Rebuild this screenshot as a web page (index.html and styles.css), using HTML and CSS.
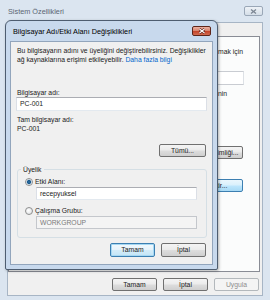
FILE: index.html
```html
<!DOCTYPE html>
<html lang="tr">

<head>
    <meta charset="UTF-8">
    <meta name="viewport" content="width=device-width, initial-scale=1.0">
    <title>Bilgisayar Adı/Etki Alanı Değişiklikleri</title>
    <link rel="stylesheet" href="styles.css">
</head>

<body>
    <!-- arka pencere: Sistem Özellikleri -->
    <div class="window">
        <div class="window-title">
            <span class="title-text">Sistem Özellikleri</span>
            <span class="close-btn inactive">
                <svg width="7" height="5" viewBox="0 0 7 5"><path d="M1 0.5 L6 4.5 M6 0.5 L1 4.5" stroke="#7d8794" stroke-width="1.3" fill="none"/></svg>
            </span>
        </div>
        <div class="window-body">
            <div class="tab-panel">
                <!-- only what shows right of the dialog -->
                <div class="panel-row">mak için</div>
                <div class="panel-input"></div>
                <div class="panel-row short">nin</div>
                <button class="btn panel-btn first">Ağ Kimliği...</button>
                <button class="btn panel-btn hot">Değiştir...</button>
            </div>
            <div class="button-row window-buttons">
                <button class="btn">Tamam</button>
                <button class="btn">İptal</button>
                <button class="btn disabled">Uygula</button>
            </div>
        </div>
    </div>

    <!-- ön pencere -->
    <div class="dialog">
        <div class="dialog-title">
            <span class="title-text">Bilgisayar Adı/Etki Alanı Değişiklikleri</span>
            <span class="close-btn active">
                <svg width="8" height="6" viewBox="0 0 8 6"><path d="M1.5 1 L6.5 5 M6.5 1 L1.5 5" stroke="#5a1a10" stroke-width="2.4" fill="none"/><path d="M1.5 1 L6.5 5 M6.5 1 L1.5 5" stroke="#ffffff" stroke-width="1.2" fill="none"/></svg>
            </span>
        </div>
        <div class="dialog-body">
            <p class="intro">Bu bilgisayarın adını ve üyeliğini değiştirebilirsiniz. Değişiklikler<br>
                ağ kaynaklarına erişimi etkileyebilir. <a href="#">Daha fazla bilgi</a></p>

            <div class="label name-label">Bilgisayar adı:</div>
            <div class="textbox">PC-001</div>

            <div class="label full-label">Tam bilgisayar adı:</div>
            <div class="label">PC-001</div>

            <div class="button-row more-row">
                <button class="btn">Tümü...</button>
            </div>

            <fieldset class="group">
                <legend>Üyelik</legend>
                <div class="radio-row first">
                    <span class="radio checked"></span>
                    <span>Etki Alanı:</span>
                </div>
                <div class="textbox indented">recepyuksel</div>
                <div class="radio-row">
                    <span class="radio"></span>
                    <span>Çalışma Grubu:</span>
                </div>
                <div class="textbox indented disabled">WORKGROUP</div>
            </fieldset>

            <div class="button-row dialog-buttons">
                <button class="btn default">Tamam</button>
                <button class="btn">İptal</button>
            </div>
        </div>
    </div>
</body>

</html>
```

FILE: styles.css
```css
body {
    margin: 0;
    font-family: "Liberation Sans", Arial, sans-serif;
    font-size: 6.8px;
    color: #1b1b1b;
    background-color: #dbe5f0;
}

/* arka pencere */

.window {
    width: 270px;
    height: 300px;
    display: flex;
    flex-direction: column;
    background-color: #dbe5f0;
    overflow: hidden;
}

.window-title {
    height: 22px;
    display: flex;
    align-items: center;
    justify-content: space-between;
    padding: 0 7px 0 8px;
    flex-shrink: 0;
}

.window-title .title-text {
    font-size: 7.3px;
    color: #5b6573;
}

.close-btn {
    display: flex;
    align-items: center;
    justify-content: center;
    box-sizing: border-box;
    width: 19px;
    height: 10px;
    border-radius: 2px;
}

.close-btn.inactive {
    border: 1px solid #9aa7b7;
    background: linear-gradient(#eef2f7, #d5dee8);
}

.close-btn.active {
    border: 1px solid #5e2519;
    background: linear-gradient(#eab1a3 0%, #d98670 45%, #c5452b 55%, #d16a4f 100%);
}

.window-body {
    flex: 1;
    margin: 0 7px 4px 7px;
    padding: 13px 2px 4px 0;
    border: 1px solid #a7b5c5;
    background-color: #f0f0f0;
    display: flex;
    flex-direction: column;
}

.tab-panel {
    height: 236px;
    box-sizing: border-box;
    border: 1px solid #898c95;
    background-color: #fbfcfc;
    padding: 0 16px 0 10px;
    display: flex;
    flex-direction: column;
}

.panel-row {
    align-self: flex-end;
    white-space: nowrap;
    height: 9px;
    line-height: 9px;
    margin-top: 10px;
}

.panel-row.short {
    margin-top: 4px;
    margin-right: 16px;
}

.panel-input {
    height: 12px;
    margin-top: 15px;
    margin-left: 198px;
    margin-right: -1px;
    border: 1px solid #c9ccd2;
    border-right-color: #dde1e6;
    background-color: #ffffff;
}

.panel-btn {
    align-self: flex-end;
    width: 65px;
    margin-top: 48px;
    padding-right: 22px;
    white-space: nowrap;
}

.panel-btn.hot {
    margin-top: 20px;
    padding-right: 18px;
    border-color: #3c7fb1;
    background: linear-gradient(#eaf6fd 0%, #d9f0fc 48%, #bee6fd 52%, #a7d9f5 100%);
}

.window-buttons {
    margin-top: 6px;
    margin-right: 1px;
}

/* buttons */

.button-row {
    display: flex;
    justify-content: flex-end;
    gap: 6px;
}

.btn {
    width: 45px;
    height: 13px;
    padding: 0;
    box-sizing: border-box;
    border: 1px solid #707070;
    border-radius: 2px;
    background: linear-gradient(#f4f4f4 0%, #ebebeb 48%, #dddddd 52%, #cfcfcf 100%);
    font-family: inherit;
    font-size: 6.8px;
    color: #1b1b1b;
    line-height: 11px;
    text-align: center;
}

.btn.disabled {
    border-color: #b3b8bc;
    background: #f4f4f4;
    color: #8d8d8d;
}

.btn.default {
    border-color: #3c7fb1;
    box-shadow: inset 0 0 0 1px #a6d8f3;
    background: linear-gradient(#f2f9fd 0%, #e6f3fb 48%, #d3ecf9 52%, #c4e5f6 100%);
}

/* ön pencere */

.dialog {
    position: absolute;
    left: 5px;
    top: 20px;
    width: 213px;
    height: 250px;
    box-sizing: border-box;
    border: 1px solid #4e5d70;
    border-radius: 6px 6px 2px 2px;
    background-color: #c8d9ed;
    display: flex;
    flex-direction: column;
    box-shadow: 1px 1px 3px rgba(0, 0, 0, 0.3);
}

.dialog-title {
    height: 20px;
    display: flex;
    align-items: center;
    justify-content: space-between;
    padding: 0 6px 0 7px;
    flex-shrink: 0;
}

.dialog-title .title-text {
    font-size: 7.3px;
    color: #000000;
}

.dialog-body {
    flex: 1;
    margin: 0 4px 4px 4px;
    padding: 0 5px 0 6px;
    border: 1px solid #92a5bc;
    background-color: #f0f0f0;
    display: flex;
    flex-direction: column;
}

.intro {
    margin: 4px 0 0 0;
    line-height: 9px;
    white-space: nowrap;
}

.intro a {
    color: #0066cc;
    text-decoration: none;
}

.label {
    height: 9px;
    line-height: 9px;
    white-space: nowrap;
}

.name-label {
    margin-top: 24px;
}

.full-label {
    margin-top: 4px;
}

.textbox {
    height: 14px;
    box-sizing: border-box;
    margin-left: -1px;
    padding-left: 3px;
    border: 1px solid #abadb3;
    border-left-color: #dbdfe6;
    border-right-color: #dbdfe6;
    border-bottom-color: #e3e9ef;
    background-color: #ffffff;
    line-height: 12px;
}

.textbox.indented {
    height: 13px;
    line-height: 11px;
    margin-left: 18px;
    width: 161px;
}

.textbox.disabled {
    border-color: #c4c7cc;
    background-color: #f4f4f4;
    color: #7a7a7a;
}

.more-row {
    margin-top: 11px;
    margin-right: 1px;
}

.more-row .btn {
    width: 47px;
}

.group {
    margin: 8px 0 0 0;
    padding: 0 0 8px 0;
    border: 1px solid #d5dfe5;
    border-radius: 3px;
    min-width: 0;
}

.group legend {
    margin-left: 3px;
    padding: 0 2px;
    line-height: 9px;
}

.radio-row {
    display: flex;
    align-items: center;
    gap: 2px;
    height: 9px;
    margin: 6px 0 1px 7px;
}

.radio-row.first {
    margin-top: 3px;
}

.radio {
    width: 8px;
    height: 8px;
    box-sizing: border-box;
    border: 1px solid #8e8f8f;
    border-radius: 50%;
    background: radial-gradient(circle at 40% 40%, #ffffff, #d9dcdf);
}

.radio.checked {
    background: radial-gradient(circle, #2b6ea2 0, #1c5a8c 1.6px, #b9d2e6 2.4px, #ffffff 3px, #d9dcdf 4px);
}

.dialog-buttons {
    margin-top: 5px;
    margin-right: 1px;
}

.dialog-buttons .btn {
    height: 14px;
    line-height: 12px;
}
```
